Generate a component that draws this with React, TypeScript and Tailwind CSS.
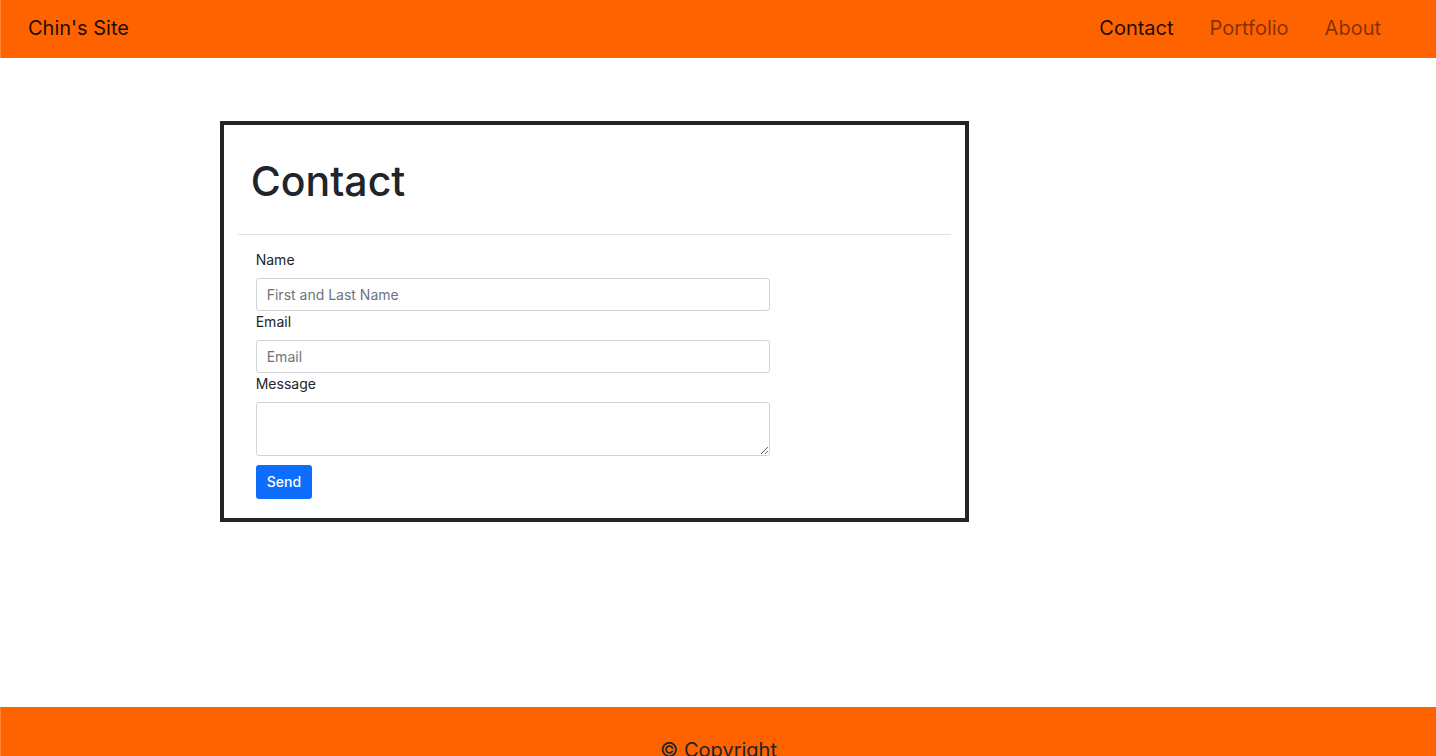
const links = [
  { label: "Contact", active: true },
  { label: "Portfolio", active: false },
  { label: "About", active: false },
];

const field =
  "block w-full rounded-[3px] border border-[#ced4da] bg-white px-2.5 text-sm text-[#212529] placeholder:text-[#6c757d] placeholder:opacity-100 focus:border-[#86b7fe] focus:outline-none";
const labelText = "mb-[7px] block text-sm leading-[22px]";

function Header() {
  return (
    <header className="flex h-[58px] shrink-0 items-center justify-between border-l border-[#ff8533] bg-[#ff6300] pr-[55px] pb-0.5 pl-[27px] text-xl">
      <a href="#home" className="text-black/90">
        Chin's Site
      </a>
      <nav className="flex gap-9">
        {links.map((link) => (
          <a
            key={link.label}
            href={"#" + link.label.toLowerCase()}
            className={link.active ? "text-black/90" : "text-black/50"}
          >
            {link.label}
          </a>
        ))}
      </nav>
    </header>
  );
}

function ContactForm() {
  return (
    <form className="mt-3.5 ml-[18px] max-w-[514px]" onSubmit={(e) => e.preventDefault()}>
      <label htmlFor="name" className={labelText}>
        Name
      </label>
      <input id="name" type="text" placeholder="First and Last Name" className={field + " h-[33px]"} />
      <label htmlFor="email" className={labelText}>
        Email
      </label>
      <input id="email" type="email" placeholder="Email" className={field + " h-[33px]"} />
      <label htmlFor="message" className={labelText}>
        Message
      </label>
      <textarea id="message" rows={2} className={field + " h-[54px] resize-y py-1"} />
      <button
        type="submit"
        className="mt-[9px] block h-[34px] rounded-[3px] bg-[#0d6efd] px-[11px] text-sm font-medium text-white"
      >
        Send
      </button>
    </form>
  );
}

export default function App() {
  return (
    <div className="flex h-screen flex-col overflow-hidden bg-white font-['Inter',sans-serif] text-[#212529]">
      <Header />
      <main className="shrink-0 pt-[63px] pb-[185px]">
        <section className="ml-[15.3%] w-[52.2%] border-4 border-[#212529] px-3.5 pt-7 pb-[19px]">
          <h1 className="mb-[25px] ml-[13px] text-[41px] leading-[56px] font-medium">Contact</h1>
          <hr className="border-[#dfe0e1]" />
          <ContactForm />
        </section>
      </main>
      <footer className="shrink-0 border-l border-[#ff8533] bg-[#ff6300] py-[29px] text-center text-xl">
        © Copyright
      </footer>
    </div>
  );
}
